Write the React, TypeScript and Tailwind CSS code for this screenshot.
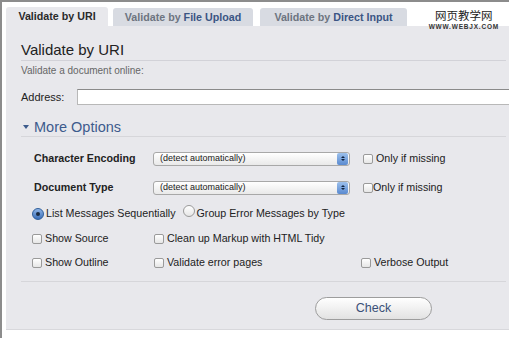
import React from 'react';

const Checkbox = () => (
  <span className="inline-block w-[10px] h-[10px] border border-[#9a9a9a] rounded-[2px] bg-gradient-to-b from-white to-[#e6e6e6] shrink-0" />
);

const Radio = ({ checked }: { checked?: boolean }) => (
  <span
    className={
      checked
        ? 'inline-flex items-center justify-center w-[12px] h-[12px] rounded-full border border-[#2d5d9a] bg-gradient-to-b from-[#8fb5e6] to-[#3b6fb8] shrink-0'
        : 'inline-flex items-center justify-center w-[12px] h-[12px] rounded-full border border-[#9a9a9a] bg-gradient-to-b from-white to-[#e6e6e6] shrink-0'
    }
  >
    {checked && <span className="w-[4px] h-[4px] rounded-full bg-[#1a2a40]" />}
  </span>
);

const Select = () => (
  <div className="flex items-center w-[197px] h-[14px] border border-[#a8a8a8] rounded-[3px] bg-gradient-to-b from-white to-[#e9e9e9] pl-[6px] text-[9px] text-[#222]">
    <span className="flex-1">(detect automatically)</span>
    <span className="flex flex-col items-center justify-center w-[11px] h-[12px] mr-[1px] rounded-[2px] bg-gradient-to-b from-[#9cc0ec] to-[#5a8ad0] gap-[1px]">
      <span className="w-0 h-0 border-l-[2px] border-r-[2px] border-b-[2px] border-l-transparent border-r-transparent border-b-[#10233f]" />
      <span className="w-0 h-0 border-l-[2px] border-r-[2px] border-t-[2px] border-l-transparent border-r-transparent border-t-[#10233f]" />
    </span>
  </div>
);

export default function App() {
  return (
    <div
      className="w-[509px] h-[338px] overflow-hidden bg-white border-t-2 border-l-2 border-[#8c8c8c] text-[#222]"
      style={{ fontFamily: '"Liberation Sans", Arial, sans-serif' }}
    >
      <div className="flex items-end h-[24px] pl-[4px] gap-[5px] relative">
        <div className="w-[102px] h-[19px] bg-[#e8e8ec] rounded-t-[3px] flex items-center justify-center text-[10.7px] font-bold text-[#2a2a2a]">
          Validate by URI
        </div>
        <div className="w-[140px] h-[18px] bg-[#d8dbe2] rounded-t-[3px] flex items-center justify-center text-[10.7px] font-bold text-[#6d7480] gap-[3px]">
          Validate by <span className="text-[#3b5584]">File Upload</span>
        </div>
        <div className="w-[147px] h-[18px] ml-[2px] bg-[#d8dbe2] rounded-t-[3px] flex items-center justify-center text-[10.7px] font-bold text-[#6d7480] gap-[3px]">
          Validate by <span className="text-[#3b5584]">Direct Input</span>
        </div>
        <div className="absolute right-[10px] top-[8px] flex flex-col items-center leading-none">
          <span className="text-[11.5px] text-[#222]" style={{ fontFamily: '"Noto Sans CJK SC", sans-serif' }}>网页教学网</span>
          <span className="text-[6.5px] font-bold text-[#333] tracking-[0.8px] mt-[2px]">WWW.WEBJX.COM</span>
        </div>
      </div>

      <div className="ml-[4px] w-[520px] h-[304px] bg-[#e8e8ec] border-b border-[#d8d8dc] pl-[15px] pt-[14px]">
        <div className="text-[15px] leading-[20px] text-[#222] border-b border-[#d2d2d8] mr-[20px]">
          Validate by URI
        </div>
        <div className="text-[10px] leading-[12px] text-[#666] pt-[4px]">
          Validate a document online:
        </div>
        <div className="flex items-center pt-[12px] gap-[13px]">
          <span className="text-[11px] text-[#222]">Address:</span>
          <div className="flex-1 h-[16px] bg-white border border-[#b8b8b8] border-t-[#8a8a8a]" />
        </div>
        <div className="flex items-center gap-[5px] pt-[13px] border-b border-[#d6d6da] mr-[20px] text-[#3d5b8c]">
          <span className="w-0 h-0 border-l-[3px] border-r-[3px] border-t-[4px] border-l-transparent border-r-transparent border-t-[#3d5b8c] ml-[2px]" />
          <span className="text-[14.5px] leading-[17px]">More Options</span>
        </div>

        <div className="pl-[13px] pt-[15px] flex flex-col text-[10.7px]">
          <div className="flex items-center h-[14px]">
            <span className="w-[119px] font-bold">Character Encoding</span>
            <Select />
            <span className="ml-[13px] flex items-center gap-[3px]">
              <Checkbox /> Only if missing
            </span>
          </div>
          <div className="flex items-center h-[14px] mt-[15px]">
            <span className="w-[119px] font-bold">Document Type</span>
            <Select />
            <span className="ml-[13px] flex items-center">
              <Checkbox />Only if missing
            </span>
          </div>
          <div className="flex items-center h-[14px] mt-[12px] -ml-[2px]">
            <Radio checked />
            <span className="ml-[2px]">List Messages Sequentially</span>
            <span className="ml-[7px]"><Radio /></span>
            <span className="ml-[2px]">Group Error Messages by Type</span>
          </div>
          <div className="flex items-center h-[14px] mt-[11px] -ml-[2px]">
            <span className="w-[122px] flex items-center gap-[3px]"><Checkbox /> Show Source</span>
            <span className="flex items-center gap-[3px]"><Checkbox /> Clean up Markup with HTML Tidy</span>
          </div>
          <div className="flex items-center h-[14px] mt-[10px] -ml-[2px]">
            <span className="w-[122px] flex items-center gap-[3px]"><Checkbox /> Show Outline</span>
            <span className="w-[207px] flex items-center gap-[3px]"><Checkbox /> Validate error pages</span>
            <span className="flex items-center gap-[3px]"><Checkbox /> Verbose Output</span>
          </div>
        </div>

        <div className="border-t border-[#d6d6da] mt-[11px] mr-[20px] pt-[15px] flex">
          <button className="ml-[294px] w-[117px] h-[23px] rounded-full border border-[#9d9d9d] bg-gradient-to-b from-white to-[#e2e2e2] text-[12.5px] text-[#3a5078]">
            Check
          </button>
        </div>
      </div>
    </div>
  );
}
